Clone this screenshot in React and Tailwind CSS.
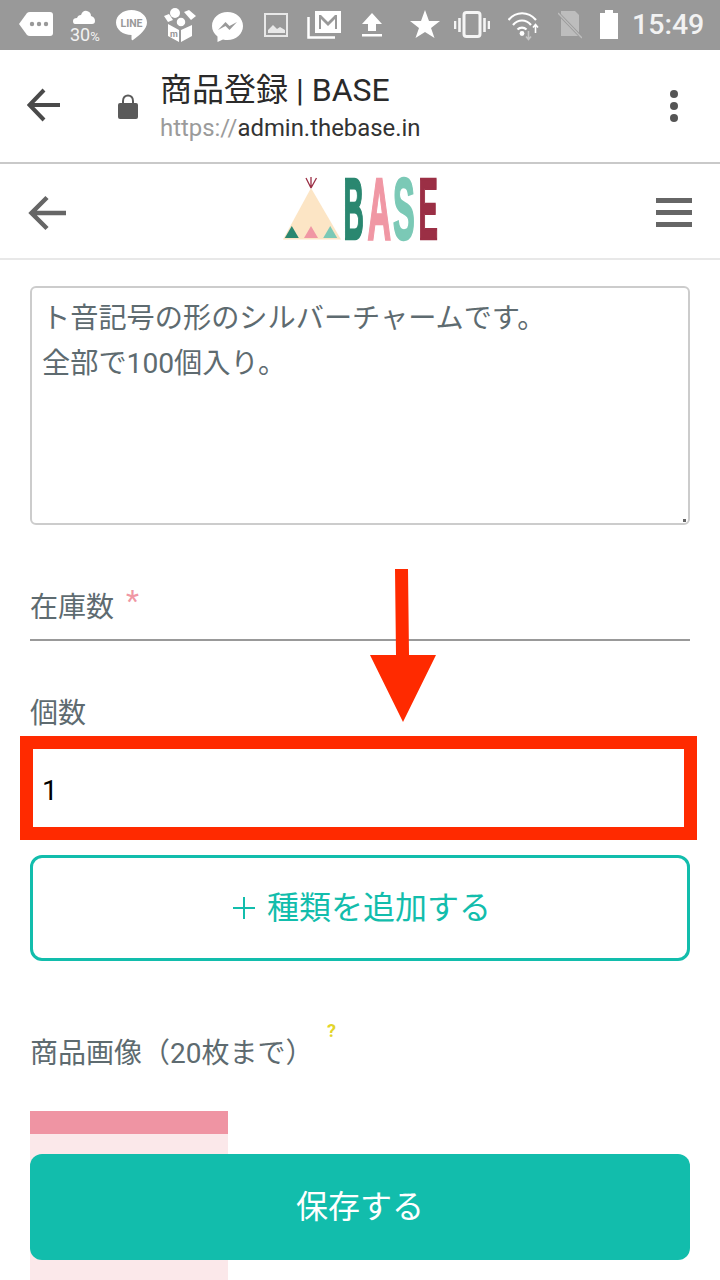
const FONT = "font-['Roboto','Noto_Sans_CJK_JP',sans-serif]";

function StatusIcons() {
  return (
    <>
      {/* message */}
      <svg className="ml-[19px] shrink-0" width="34" height="50" viewBox="0 0 34 50">
        <path d="M0 24 L8 13 Q9 12 11 12 H31 Q34 12 34 15 V33 Q34 36 31 36 H11 Q9 36 8 35 Z" fill="#fff" />
        <circle cx="13" cy="24" r="2.2" fill="#999" />
        <circle cx="20" cy="24" r="2.2" fill="#999" />
        <circle cx="27" cy="24" r="2.2" fill="#999" />
      </svg>
      {/* weather */}
      <div className="ml-[17px] w-[29px] h-[50px] shrink-0 relative">
        <svg className="absolute left-[3px] top-0" width="22" height="26" viewBox="0 0 22 26">
          <path d="M2 24 Q0 24 0 21 Q0 18 4 18 Q5 15 8 15 Q10 10 14 11 Q18 12 18 16 Q22 17 22 21 Q22 24 19 24 Z" fill="#fff" />
        </svg>
        <span className="absolute left-0 top-[26px] text-[18px] leading-[18px] text-[#f2f2f2] whitespace-nowrap">30<span className="text-[13px]">%</span></span>
      </div>
      {/* LINE */}
      <svg className="ml-[17px] shrink-0" width="31" height="50" viewBox="0 0 31 50">
        <path d="M15.5 10 C24 10 31 15.5 31 22.5 C31 29 24 35 17 40 C16 40.5 15.5 40 15.5 38.5 V35 C7 35 0 29.5 0 22.5 C0 15.5 7 10 15.5 10 Z" fill="#fff" />
        <text x="15.5" y="27" textAnchor="middle" fontSize="10.5" fontWeight="700" fill="#999" fontFamily="Roboto, sans-serif">LINE</text>
      </svg>
      {/* box */}
      <svg className="ml-[17px] shrink-0" width="32" height="50" viewBox="0 0 32 50">
        <circle cx="11" cy="13" r="5" fill="#fff" />
        <path d="M20 12 L25 10 L32 16 L27 20 Z M0 16 L5 14 L9 20 L4 22 Z" fill="#fff" />
        <circle cx="17" cy="22" r="5" fill="#fff" stroke="#999" strokeWidth="1.5" />
        <path d="M4 24 L15 30 L15 42 L4 36 Z M17 42 V30 L28 25 V36 Z" fill="#fff" />
        <text x="10" y="37" textAnchor="middle" fontSize="9" fontWeight="700" fill="#999" fontFamily="Roboto, sans-serif">m</text>
      </svg>
      {/* messenger */}
      <svg className="ml-[16px] shrink-0" width="31" height="50" viewBox="0 0 31 50">
        <path d="M15.5 12 C24 12 31 18 31 26 C31 34 24 40 15.5 40 C14 40 12.5 39.8 11 39.4 L5.5 42 V36.5 C2 33.8 0 30 0 26 C0 18 7 12 15.5 12 Z" fill="#fff" />
        <path d="M6 30 L13.5 22 L17.5 26 L25 22 L17.5 30 L13.5 26 Z" fill="#999" />
      </svg>
      {/* image */}
      <svg className="ml-[21px] shrink-0" width="24" height="50" viewBox="0 0 24 50">
        <rect x="1" y="14" width="22" height="22" fill="none" stroke="#e8e8e8" strokeWidth="2" />
        <path d="M4 33 V30 L9 25 L13 29 L16 27 L21 30 V33 Z" fill="#e8e8e8" />
      </svg>
      {/* gmail */}
      <svg className="ml-[19px] shrink-0" width="34" height="50" viewBox="0 0 34 50">
        <path d="M1.5 17 V37.5 H28" fill="none" stroke="#fff" strokeWidth="2.5" />
        <path d="M8 11 H34 V33 H8 Z" fill="#fff" />
        <path d="M12 15 H14 L21 22 L28 15 H30 V29 H28 V19 L21 26 L14 19 V29 H12 Z" fill="#999" />
      </svg>
      {/* upload */}
      <svg className="ml-[21px] shrink-0" width="20" height="50" viewBox="0 0 20 50">
        <path d="M10 13 L20 24 H14 V31 H6 V24 H0 Z" fill="#fff" />
        <rect x="0" y="34" width="20" height="2.5" fill="#fff" />
      </svg>
      {/* star */}
      <svg className="ml-[28px] shrink-0" width="30" height="50" viewBox="0 0 30 50">
        <path d="M15 10 L19 21 L30 21 L21 28 L24.5 38 L15 32 L5.5 38 L9 28 L0 21 L11 21 Z" fill="#fff" />
      </svg>
      {/* vibrate */}
      <svg className="ml-[14px] shrink-0" width="36" height="50" viewBox="0 0 36 50" fill="none" stroke="#f5f5f5">
        <rect x="10" y="12.5" width="16" height="24" rx="2.5" strokeWidth="3" />
        <path d="M5.5 18 V32 M1 21 V29 M30.5 18 V32 M35 21 V29" strokeWidth="2.6" />
      </svg>
      {/* wifi */}
      <svg className="ml-[18px] shrink-0" width="32" height="50" viewBox="0 0 32 50" fill="none">
        <path d="M0.5 20 C8 11 20 11 28 20 M5 25 C10 19 18 19 23 25 M9.5 29.5 C12 27 16 27 18.5 29.5" stroke="#fff" strokeWidth="2.2" />
        <circle cx="14" cy="33.5" r="2.4" fill="#fff" />
        <path d="M27.5 33 V25 M25 27.5 L27.5 24.5 L30 27.5" stroke="#fff" strokeWidth="1.6" />
        <path d="M20.5 31 V39 M18 36.5 L20.5 39.5 L23 36.5" stroke="#c6c6c6" strokeWidth="1.6" />
      </svg>
      {/* no sim */}
      <svg className="ml-[18px] shrink-0" width="24" height="50" viewBox="0 0 24 50">
        <path d="M3 11 H17 L21 15 V36 H3 Z" fill="#bdbdbd" />
        <path d="M0 13 L25 39" stroke="#999" strokeWidth="3" />
        <path d="M0 13 L24 38" stroke="#bdbdbd" strokeWidth="1.4" />
      </svg>
      {/* battery */}
      <svg className="ml-[18px] shrink-0" width="18" height="50" viewBox="0 0 18 50">
        <path d="M5 13 V10 H13 V13 H18 V39 H0 V13 Z" fill="#fff" />
      </svg>
      <span className="ml-[14px] text-[28.5px] leading-none font-medium text-[#f2f2f2]">15:49</span>
    </>
  );
}

function Logo() {
  return (
    <svg className="mb-[6px] overflow-visible" width="157" height="66" viewBox="283 175 157 66">
      <path d="M311 188 L341 239.5 H283 Z" fill="#fce5c5" />
      <path d="M311 188 L306 178 M311 188 V177 M311 188 L316.5 178" stroke="#9b2f45" strokeWidth="1.3" fill="none" />
      <path d="M291.8 226 L298.8 238 H284.8 Z" fill="#2a8770" />
      <path d="M311 226 L318 238 H304 Z" fill="#f097a4" />
      <path d="M330.2 226 L337.2 238 H323.2 Z" fill="#7bc9b6" />
      <g fontFamily="'Liberation Sans', sans-serif" fontWeight="700" fontSize="88" strokeWidth="2.5">
        <text transform="translate(343.5 239) scale(0.32 1)" fill="#2a8770" stroke="#2a8770">B</text>
        <text transform="translate(367.5 239) scale(0.37 1)" fill="#f097a4" stroke="#f097a4">A</text>
        <text transform="translate(393 239) scale(0.37 1)" fill="#7bc9b6" stroke="#7bc9b6">S</text>
        <text transform="translate(418.5 239) scale(0.33 1)" fill="#9b2f45" stroke="#9b2f45">E</text>
      </g>
    </svg>
  );
}

export default function App() {
  return (
    <div className={`relative w-[720px] h-[1280px] overflow-hidden bg-white ${FONT}`}>
      {/* status bar */}
      <div className="h-[50px] bg-[#999999] flex items-center">
        <StatusIcons />
      </div>

      {/* browser bar */}
      <div className="h-[114px] border-b-2 border-[#c9c9c9] flex items-start">
        <svg className="ml-[27px] mt-[38px] shrink-0" width="34" height="34" viewBox="0 0 34 34" fill="none" stroke="#4a4a4a" strokeWidth="4">
          <path d="M33 17 H3 M17 2 L2.5 17 L17 32" />
        </svg>
        <svg className="ml-[57px] mt-[44px] shrink-0" width="20" height="26" viewBox="0 0 20 26">
          <path d="M5 11 V7 C5 -0.5 15 -0.5 15 7 V11" fill="none" stroke="#5a5a5a" strokeWidth="2" />
          <rect x="0" y="9" width="20" height="16" rx="2" fill="#5a5a5a" />
        </svg>
        <div className="ml-[22px] mt-[20px] flex-1">
          <div className="text-[32px] leading-[40px] text-[#2a2a2a]">商品登録 | BASE</div>
          <div className="text-[23.9px] leading-[36px] text-[#333333]">
            <span className="text-[#9b9b9b]">https://</span>admin.thebase.in
          </div>
        </div>
        <div className="mr-[42px] mt-[40px] flex flex-col gap-[4px]">
          <span className="w-[8px] h-[8px] rounded-full bg-[#555555]" />
          <span className="w-[8px] h-[8px] rounded-full bg-[#555555]" />
          <span className="w-[8px] h-[8px] rounded-full bg-[#555555]" />
        </div>
      </div>

      {/* site header */}
      <div className="h-[96px] border-b-2 border-[#e8e8e8] flex items-center justify-between pl-[28px] pr-[28px]">
        <svg className="mt-[3px]" width="38" height="36" viewBox="0 0 38 36" fill="none" stroke="#666666" strokeWidth="4.5">
          <path d="M38 18 H4 M19 2.5 L3.5 18 L19 33.5" />
        </svg>
        <Logo />
        <div className="mt-[2px] w-[36px] flex flex-col gap-[7px]">
          <span className="h-[5px] bg-[#666666]" />
          <span className="h-[5px] bg-[#666666]" />
          <span className="h-[5px] bg-[#666666]" />
        </div>
      </div>

      {/* form */}
      <div className="px-[30px] pt-[26px]">
        <div className="relative">
          <textarea
            readOnly
            defaultValue={"ト音記号の形のシルバーチャームです。\n全部で100個入り。"}
            className="block w-[660px] h-[239px] resize-none border-2 border-[#cccccc] rounded-[6px] px-[10px] py-[8px] text-[28.2px] leading-[45px] text-[#5e6b70] outline-none"
          />
          <span className="absolute right-[4px] bottom-[3px] w-[3px] h-[3px] bg-[#666666]" />
        </div>

        <div className="mt-[61px] pb-[13px] h-[55px] border-b-2 border-[#999999] flex items-start text-[28px] leading-[44px] text-[#5e6b70]">
          在庫数
          <span className="ml-[12px] text-[#f097a4] text-[30px] leading-[30px]">*</span>
        </div>

        <div className="mt-[51px] h-[40px] text-[28px] leading-[44px] text-[#5e6b70]">個数</div>
        <input
          readOnly
          defaultValue="1"
          className="block mt-[20px] w-[660px] h-[76px] px-[12px] text-[28px] text-black outline-none bg-transparent"
        />

        <div className="mt-[27px] h-[106px] pl-[4px] border-[3px] border-[#12bdac] rounded-[12px] flex items-center justify-center text-[32px] text-[#12bdac]">
          <svg className="mr-[12px]" width="22" height="22" viewBox="0 0 22 22" stroke="#12bdac" strokeWidth="2">
            <path d="M0 11 H22 M11 0 V22" />
          </svg>
          種類を追加する
        </div>

        <div className="relative mt-[71px] h-[40px] text-[28px] leading-[44px] text-[#5e6b70]">
          商品画像（20枚まで）
          <span className="absolute left-[297px] top-[-11px] text-[18px] leading-[20px] font-bold text-[#e3d52a]">?</span>
        </div>

        <div className="mt-[39px] w-[198px] h-[169px] bg-[#fbe8ea]">
          <div className="h-[23px] bg-[#ef94a3]" />
        </div>
      </div>

      {/* fixed save button */}
      <div className="absolute left-[30px] right-[30px] bottom-[20px] h-[106px] rounded-[12px] bg-[#12bdac] flex items-center justify-center text-[32px] text-white">
        保存する
      </div>

      {/* red annotation */}
      <div className="absolute left-[20px] top-[736px] w-[677px] h-[104px] border-[13px] border-[#ff2a00]" />
      <svg className="absolute left-[365px] top-[565px]" width="76" height="160" viewBox="365 565 76 160">
        <path d="M395 569 H408 L409 655 H436 L403 722 L370 655 H396 Z" fill="#ff2a00" />
      </svg>
    </div>
  );
}
